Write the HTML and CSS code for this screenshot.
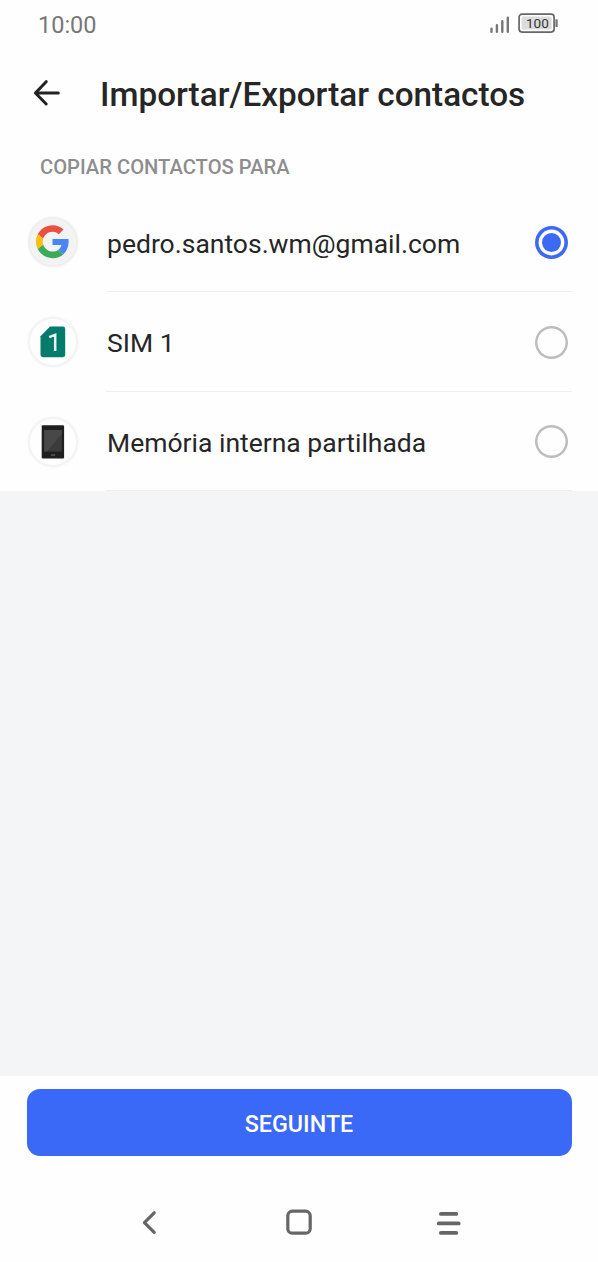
FILE: index.html
```html
<!DOCTYPE html>
<html lang="pt">
<head>
<meta charset="utf-8">
<title>Importar/Exportar contactos</title>
<link rel="stylesheet" href="styles.css">
</head>
<body>
<div class="screen">
  <div class="status">
    <span class="clock">10:00</span>
    <svg class="status-icons" width="70" height="24" viewBox="0 0 70 24">
      <g stroke="#777" stroke-width="2.4" stroke-linecap="round">
        <path d="M3.5 17.6V20.8M8.9 14.2V20.8M14.3 10.2V20.8M19.8 6.8V20.8"/>
      </g>
      <rect x="31.1" y="3.1" width="35" height="18" rx="3" fill="#fff" stroke="#666" stroke-width="1.7"/>
      <rect x="33.6" y="5.6" width="30" height="13" rx="1.5" fill="#dcdcdc"/>
      <rect x="67.4" y="8.2" width="2.3" height="7.8" rx=".6" fill="#777"/>
      <text class="battery" x="49.4" y="17.2" text-anchor="middle">100</text>
    </svg>
  </div>

  <header class="header">
    <svg class="back" width="28" height="28" viewBox="0 0 28 28" fill="none" stroke="#222" stroke-width="3" stroke-linecap="round" stroke-linejoin="round">
      <path d="M13.2 2.7L2.4 14L13.2 25M2.6 14H25.3"/>
    </svg>
    <h1 class="title">Importar/Exportar contactos</h1>
  </header>

  <h2 class="section">COPIAR CONTACTOS PARA</h2>

  <ul class="list">
    <li class="item">
      <span class="avatar avatar-google">
        <svg width="33" height="34" viewBox="0 0 48 49">
          <path fill="#ea4f41" d="M24 9.5c3.54 0 6.71 1.22 9.21 3.6l6.85-6.85C35.9 2.38 30.47 0 24 0 14.62 0 6.51 5.38 2.56 13.22l7.98 6.19C12.43 13.72 17.74 9.5 24 9.5z"/>
          <path fill="#4a86f3" d="M47.5 24.55c0-1.57-.15-3.09-.38-4.55H24v9.02h12.94c-.58 2.96-2.26 5.48-4.78 7.18l7.73 6c4.51-4.18 7.61-10.36 7.61-17.65z"/>
          <path fill="#fbc012" d="M10.53 28.59c-.48-1.45-.76-2.99-.76-4.59s.27-3.14.76-4.59l-7.98-6.19C.92 16.46 0 20.12 0 24s.92 7.54 2.56 10.78l7.97-6.19z"/>
          <path fill="#3caa57" d="M24 48c6.48 0 11.93-2.13 15.89-5.81l-7.73-6c-2.15 1.45-4.92 2.3-8.16 2.3-6.26 0-11.57-4.22-13.47-9.91l-7.98 6.19C6.51 42.62 14.62 48 24 48z"/>
        </svg>
      </span>
      <div class="row">
        <span class="label">pedro.santos.wm@gmail.com</span>
        <span class="radio radio-on"></span>
      </div>
    </li>
    <li class="item item-tall">
      <span class="avatar">
        <svg width="26" height="32" viewBox="0 0 26 32">
          <path fill="#057b6c" d="M10 .6H22.8Q25.2.6 25.2 3V28.8Q25.2 31.2 22.8 31.2H2.9Q.5 31.2.5 28.8V10.2Z"/>
          <path fill="none" stroke="#e5f6f3" stroke-width="2.5" d="M9.2 11.2L15.2 8.9V25"/>
        </svg>
      </span>
      <div class="row">
        <span class="label">SIM 1</span>
        <span class="radio"></span>
      </div>
    </li>
    <li class="item">
      <span class="avatar">
        <svg width="24" height="34" viewBox="0 0 24 34">
          <rect x=".7" y=".3" width="22.4" height="33.2" rx="1.2" fill="#1f1f1f"/>
          <rect x="3.2" y="5" width="17.6" height="21.6" fill="#3b3b3b"/>
          <path d="M20.8 5V9L6 26.6H3.2V5Z" fill="#484848"/>
          <rect x="9.8" y="29.3" width="4.5" height="1.5" rx=".5" fill="#555"/>
        </svg>
      </span>
      <div class="row">
        <span class="label">Memória interna partilhada</span>
        <span class="radio"></span>
      </div>
    </li>
  </ul>

  <div class="filler"></div>

  <footer class="footer">
    <button class="next">SEGUINTE</button>
  </footer>

  <nav class="nav">
    <svg width="26" height="28" viewBox="0 0 26 28" fill="none" stroke="#666" stroke-width="3.2" stroke-linecap="round" stroke-linejoin="round">
      <path d="M18.2 3.8L8.4 13.7L18.2 23.4"/>
    </svg>
    <svg width="26" height="28" viewBox="0 0 26 28" fill="none" stroke="#666" stroke-width="3.2">
      <rect x="1.8" y="2.2" width="22.4" height="22" rx="4.5"/>
    </svg>
    <svg width="26" height="28" viewBox="0 0 26 28" fill="none" stroke="#666" stroke-width="3.8" stroke-linecap="round">
      <path d="M5.9 4.9H21.3M3.7 14.4H23.7M5.9 23.9H21.3"/>
    </svg>
  </nav>
</div>
</body>
</html>
```
FILE: styles.css
```css
* {
  box-sizing: border-box;
  margin: 0;
  padding: 0;
}

body {
  background: #fefefe;
  font-family: Roboto, "Liberation Sans", sans-serif;
  color: #262626;
}

.screen {
  display: flex;
  flex-direction: column;
  height: 1262px;
  width: 598px;
  overflow: hidden;
}

svg {
  display: block;
  flex: none;
}

.status {
  display: flex;
  justify-content: space-between;
  height: 48px;
  padding: 11px 40px 0 38px;
}

.clock {
  font-size: 23.5px;
  line-height: 28px;
  color: #777;
}

.battery {
  font-size: 13.5px;
  fill: #333;
}

.header {
  display: flex;
  align-items: center;
  gap: 39px;
  height: 92px;
  padding-left: 33px;
}

.back {
  margin-bottom: 2px;
}

.title {
  padding-top: 2px;
  font-size: 33.3px;
  font-weight: 500;
  line-height: 40px;
  white-space: nowrap;
}

.section {
  height: 53px;
  padding-left: 40px;
  font-size: 20.2px;
  font-weight: 500;
  line-height: 54px;
  color: #8d8d8d;
}

.list {
  height: 298px;
  list-style: none;
}

.item {
  display: flex;
  height: 99px;
  padding: 0 26px 0 28px;
}

.item-tall {
  height: 100px;
}

.avatar {
  display: flex;
  align-items: center;
  justify-content: center;
  width: 50px;
  height: 50px;
  margin: 24.5px 28px 0 0;
  border: 2px solid #f3f3f3;
  border-radius: 50%;
  box-shadow: 0 0 3px #f1f1f1;
}

.avatar-google {
  margin-top: 24px;
  padding-right: 1px;
  background: #f3f3f3;
  border-color: #efefef;
}

.row {
  display: flex;
  flex: 1;
  align-items: center;
  justify-content: space-between;
  padding: 1px 4px 0 1px;
  border-bottom: 1px solid #eee;
}

.label {
  padding-top: 2px;
  font-size: 26.5px;
  line-height: 32px;
  white-space: nowrap;
}

.radio {
  width: 33px;
  height: 33px;
  border-radius: 50%;
  box-shadow: inset 0 0 0 2.5px #bdbdbd;
}

.radio-on {
  padding: 7px;
  background: #3c6af5 content-box;
  box-shadow: inset 0 0 0 3.6px #3c6af5;
}

.filler {
  flex: 1;
  background: #f4f5f7;
}

.footer {
  height: 80px;
  padding: 13px 26.5px 0;
}

.next {
  display: block;
  width: 545px;
  height: 67px;
  padding-top: 2px;
  border: 0;
  border-radius: 13px;
  background: #3969f6;
  color: #fff;
  font: 500 23.3px/67px Roboto, "Liberation Sans", sans-serif;
}

.nav {
  display: flex;
  justify-content: space-between;
  height: 106px;
  padding: 53px 137px 0 136px;
}
```
